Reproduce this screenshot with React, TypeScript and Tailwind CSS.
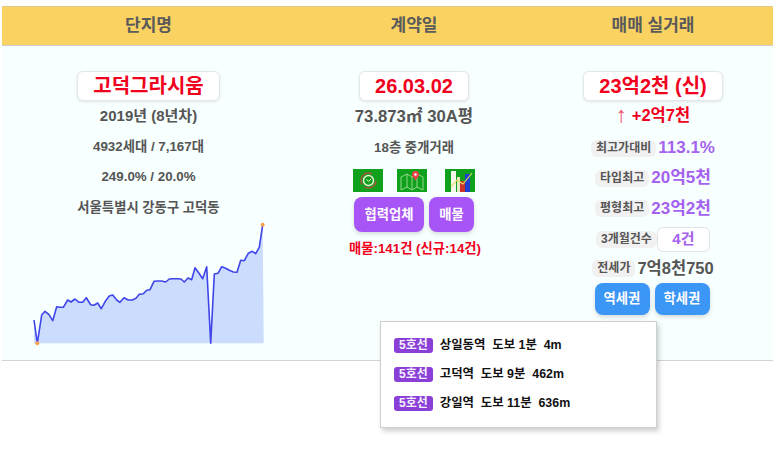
const pts: [number, number][] = [[102,330],[112,400],[125,315],[135,304],[147,314],[158,332],[170,290],[178,292],[190,292],[203,270],[213,276],[225,267],[237,277],[248,277],[259,263],[272,284],[282,286],[293,279],[304,296],[317,272],[328,258],[338,255],[350,270],[360,277],[372,263],[385,270],[397,270],[408,265],[418,253],[430,251],[440,241],[450,239],[462,214],[473,213],[485,213],[497,216],[508,207],[520,206],[532,206],[543,207],[553,216],[564,204],[575,209],[585,173],[597,190],[608,206],[620,170],[632,400],[643,192],[654,190],[665,170],[677,175],[688,181],[700,186],[711,187],[722,151],[733,152],[745,130],[757,124],[767,131],[778,112],[788,44]];
// chart-local coords: svg origin at page (30,220)
const P = pts.map(([x, y]) => [x / 3 - 30, y / 3 + 210 - 220] as [number, number]);
const line = P.map(([x, y]) => `${x.toFixed(1)},${y.toFixed(1)}`).join(" ");
const area = `${P[0][0].toFixed(1)},123.3 ${line} 233.7,123.3`;

function Chart() {
  return (
    <svg width="240" height="128" viewBox="0 0 240 128" className="block">
      <polygon points={area} fill="#ccdcfd" />
      <polyline points={line} fill="none" stroke="#3f45e8" strokeWidth="1.6" strokeLinejoin="round" />
      <circle cx={P[1][0]} cy={P[1][1]} r="2" fill="#f5a04a" />
      <circle cx={P[P.length - 1][0]} cy={P[P.length - 1][1]} r="2" fill="#f5a04a" />
    </svg>
  );
}

function ClockIcon() {
  return (
    <svg width="30" height="23" viewBox="0 0 30 23" className="block">
      <rect width="30" height="23" fill="#0fa01e" />
      <circle cx="15.5" cy="11.5" r="7.5" fill="none" stroke="#a5573a" strokeWidth="1.6" strokeDasharray="16 3 20 8" />
      <circle cx="15.5" cy="11.5" r="5" fill="none" stroke="#e8f5d8" strokeWidth="1.4" />
      <path d="M13.5 10.5 L15.5 12.5 L18 10" fill="none" stroke="#e8f5d8" strokeWidth="1" />
    </svg>
  );
}

function MapIcon() {
  return (
    <svg width="30" height="23" viewBox="0 0 30 23" className="block">
      <rect width="30" height="23" fill="#0fa01e" />
      <path d="M4 8 L10 5 L15 8 L20 5 L26 8 L26 21 L20 18 L15 21 L10 18 L4 21 Z M10 5 V18 M15 8 V21 M20 9 V18" fill="none" stroke="#9fe08f" strokeWidth="0.9" />
      <circle cx="18.5" cy="5.5" r="3.5" fill="#f0404a" />
      <path d="M16 7 L18.5 12 L21 7 Z" fill="#f0404a" />
      <circle cx="18.5" cy="5.5" r="1.2" fill="#fff" />
    </svg>
  );
}

function BarsIcon() {
  return (
    <svg width="30" height="23" viewBox="0 0 30 23" className="block">
      <rect width="30" height="23" fill="#0fa01e" />
      <rect x="6" y="2" width="5" height="21" fill="#f4f6e8" />
      <rect x="12" y="8" width="3" height="15" fill="#e8e8c8" />
      <rect x="15" y="12" width="5" height="11" fill="#c9352a" />
      <rect x="20" y="5" width="5" height="18" fill="#1f3fd0" />
      <path d="M6 18 L12 11 L18 15 L27 4" fill="none" stroke="#e6e05a" strokeWidth="1.1" />
    </svg>
  );
}

function Label({ children, className = "" }: { children: React.ReactNode; className?: string }) {
  return <span className={`rounded-md bg-[#f1f1f1] px-[5px] text-[12px] leading-[17px] font-bold text-[#555] ${className}`}>{children}</span>;
}

function Stat({ label, children, h = "h-[30px]" }: { label: string; children: React.ReactNode; h?: string }) {
  return (
    <div className={`flex ${h} items-center justify-center gap-[2px]`}>
      <Label>{label}</Label>
      {children}
    </div>
  );
}

function Value({ children }: { children: React.ReactNode }) {
  return <span className="text-[17px] leading-[22px] font-bold text-[#a462ee]">{children}</span>;
}

function NameBox({ children }: { children: React.ReactNode }) {
  return (
    <div className="rounded-md border border-[#e3e6ec] bg-white px-[15px] text-[20px] leading-[28px] font-bold text-[#f0001c] shadow-[0_1px_3px_rgba(0,0,0,0.1)]">
      {children}
    </div>
  );
}

function Station({ text }: { text: string }) {
  return (
    <div className="flex h-[29px] items-center gap-[7px]">
      <span className="rounded-[3px] bg-[#8a3fd6] px-[5px] text-[12px] leading-[15px] font-bold text-[#f5f0ff]">5호선</span>
      <span className="text-[12.4px] font-bold whitespace-pre text-[#111]">{text}</span>
    </div>
  );
}

export default function App() {
  return (
    <div className="relative h-[468px] w-[777px] overflow-hidden bg-white pt-[6px] pl-[2px] font-['Liberation_Sans','Noto_Sans_CJK_KR',sans-serif]">
      <div className="w-[771px] border-b border-[#d2d4d6] bg-[#f7ffff]">
        <div className="grid h-[40px] grid-cols-[293px_238px_240px] items-center border-t border-b border-t-[#dcc98d] border-b-[#cfcfcf] bg-[#f9d262] text-center text-[17px] font-bold text-[#5a5a5a]">
          <div>단지명</div>
          <div>계약일</div>
          <div>매매 실거래</div>
        </div>
        <div className="grid h-[314px] grid-cols-[293px_238px_240px]">
          <div className="flex flex-col items-center pt-[25px]">
            <NameBox>고덕그라시움</NameBox>
            <div className="mt-[4px] text-[15px] leading-[22px] font-bold text-[#555]">2019년 (8년차)</div>
            <div className="mt-[9px] text-[13.33px] leading-[22px] font-bold text-[#555]">4932세대 / 7,167대</div>
            <div className="mt-[8px] text-[13.33px] leading-[22px] font-bold text-[#555]">249.0% / 20.0%</div>
            <div className="mt-[9px] text-[13.33px] leading-[22px] font-bold text-[#555]">서울특별시 강동구 고덕동</div>
            <div className="mt-[1px] ml-[2px]"><Chart /></div>
          </div>
          <div className="flex flex-col items-center pt-[25px]">
            <NameBox>26.03.02</NameBox>
            <div className="mt-[5px] text-[16.7px] leading-[22px] font-bold text-[#555]">73.873㎡ 30A평</div>
            <div className="mt-[9px] text-[13.33px] leading-[22px] font-bold text-[#555]">18층 중개거래</div>
            <div className="mt-[10px] ml-[-1px] flex gap-[14px]">
              <ClockIcon />
              <MapIcon />
              <div className="ml-[4px]"><BarsIcon /></div>
            </div>
            <div className="mt-[5px] flex gap-[5px]">
              <div className="flex h-[35px] w-[70px] items-center justify-center rounded-lg bg-[#a855f7] text-[13.33px] font-bold text-white shadow-[0_2px_4px_rgba(0,0,0,0.15)]">협력업체</div>
              <div className="flex h-[35px] w-[45px] items-center justify-center rounded-lg bg-[#a855f7] text-[13.33px] font-bold text-white shadow-[0_2px_4px_rgba(0,0,0,0.15)]">매물</div>
            </div>
            <div className="mt-[8px] ml-[2px] text-[13.33px] leading-[18px] font-bold text-[#f0001c]">매물:141건 (신규:14건)</div>
          </div>
          <div className="flex flex-col items-center pt-[25px]">
            <NameBox>23억2천 (신)</NameBox>
            <div className="mt-[3px] flex h-[22px] items-center gap-[5px] text-[16.5px] font-bold text-[#f0001c]">
              <span className="text-[22px] leading-[22px] font-normal text-[#f0506a]">↑</span>
              <span>+2억7천</span>
            </div>
            <div className="mt-[7px] flex flex-col items-center">
              <Stat label="최고가대비"><Value>113.1%</Value></Stat>
              <Stat label="타입최고"><Value>20억5천</Value></Stat>
              <Stat label="평형최고" h="h-[31px]"><Value>23억2천</Value></Stat>
              <Stat label="3개월건수">
                <span className="ml-[-2px] flex h-[25px] w-[53px] items-center justify-center rounded-md border border-[#dfe3ea] bg-white text-[15px] font-bold text-[#a462ee]">4건</span>
              </Stat>
              <div className="flex h-[28px] items-center justify-center gap-[2px]">
                <Label>전세가</Label>
                <span className="text-[16.5px] font-bold text-[#555]">7억8천750</span>
              </div>
            </div>
            <div className="mt-[1px] ml-[-2px] flex gap-[5px]">
              <div className="flex h-[32px] w-[55px] items-center justify-center rounded-lg bg-[#3b96f5] text-[13.33px] font-bold text-white shadow-[0_2px_4px_rgba(0,0,0,0.15)]">역세권</div>
              <div className="flex h-[32px] w-[55px] items-center justify-center rounded-lg bg-[#3b96f5] text-[13.33px] font-bold text-white shadow-[0_2px_4px_rgba(0,0,0,0.15)]">학세권</div>
            </div>
          </div>
        </div>
      </div>
      <div className="absolute top-[321px] left-[380px] h-[107px] w-[277px] border border-[#cfcfcf] bg-white pt-[9px] pl-[13px] shadow-[2px_3px_5px_rgba(0,0,0,0.2)]">
        <Station text="상일동역  도보 1분  4m" />
        <Station text="고덕역  도보 9분  462m" />
        <Station text="강일역  도보 11분  636m" />
      </div>
    </div>
  );
}
